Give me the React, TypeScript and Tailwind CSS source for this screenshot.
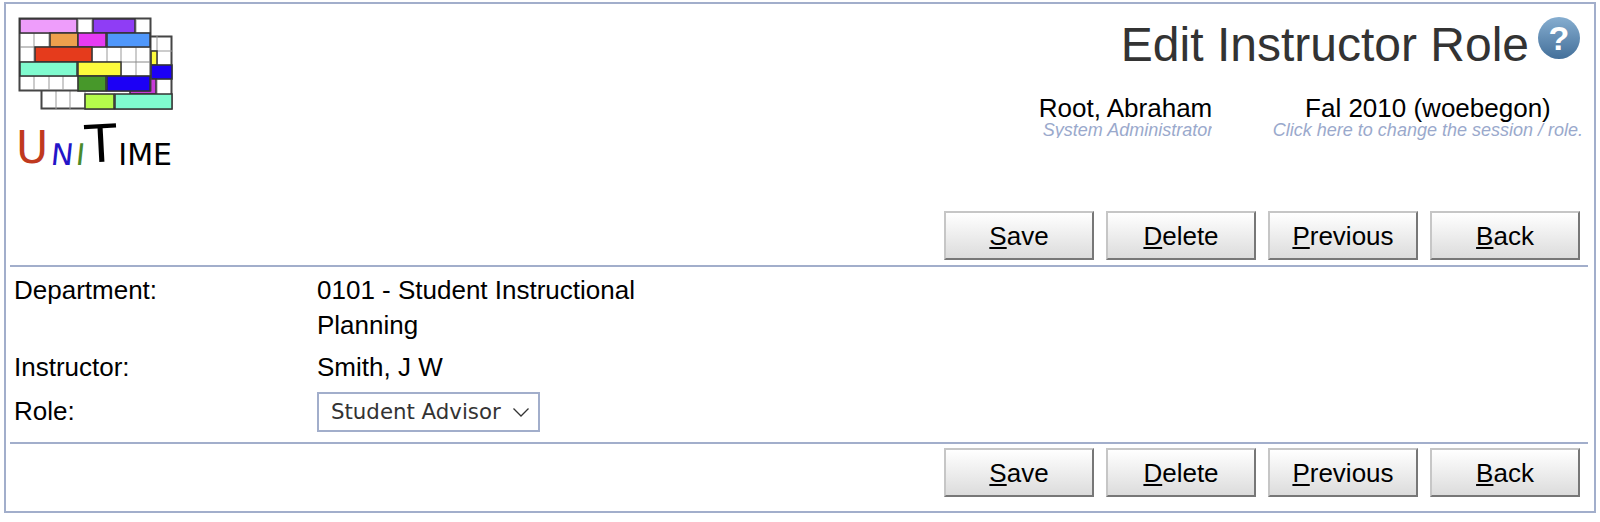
const sans = { fontFamily: '"Liberation Sans", Arial, sans-serif' };

function Logo() {
  const vLines = [34, 49, 63, 78, 92, 107, 121, 136];
  const blocks: [number, number, number, number, string][] = [
    [151, 51, 6, 14, "#fdfb3c"],
    [151, 65, 21, 14, "#1a00f5"],
    [130, 79, 26, 15, "#c93bd8"],
    [85, 94, 29, 15, "#b5fb4c"],
    [115, 94, 57, 15, "#80fbcf"],
  ];
  const front: [number, number, number, number, string][] = [
    [20, 19, 57, 14, "#ee9dfb"],
    [93, 19, 42, 14, "#8f3cf5"],
    [50, 33, 28, 14, "#eda04e"],
    [78, 33, 28, 14, "#e63bf3"],
    [107, 33, 43, 14, "#4f97fb"],
    [35, 47, 57, 15, "#e53b1f"],
    [20, 62, 57, 14, "#80fbcf"],
    [78, 62, 43, 14, "#fdfb3c"],
    [78, 76, 28, 15, "#46982a"],
    [107, 76, 43, 15, "#1a00f5"],
  ];
  return (
    <svg width="180" height="115" viewBox="0 0 180 115" className="block">
      <defs>
        <filter id="soft">
          <feGaussianBlur stdDeviation="0.6" />
        </filter>
      </defs>
      <g filter="url(#soft)">
        <rect x="41.5" y="36.5" width="130" height="72" fill="#fff" stroke="#444" strokeWidth="2" />
        <line x1="157" x2="157" y1="36" y2="109" stroke="#999" />
        {[51, 65, 79].map((y) => <line key={y} x1="151" x2="172" y1={y} y2={y} stroke="#999" />)}
        {[56, 70, 85].map((x) => <line key={x} x1={x} x2={x} y1="91" y2="109" stroke="#999" />)}
        {blocks.map(([x, y, w, h, c]) => <rect key={x + "-" + y} x={x} y={y} width={w} height={h} fill={c} stroke="#333" strokeWidth="1.5" />)}
        <rect x="19.5" y="18.5" width="131" height="72" fill="#fff" stroke="#444" strokeWidth="2" />
        {vLines.map((x) => <line key={x} x1={x} x2={x} y1="19" y2="90" stroke="#999" />)}
        {[33, 47, 62, 76].map((y) => <line key={y} x1="20" x2="150" y1={y} y2={y} stroke="#888" />)}
        {front.map(([x, y, w, h, c]) => <rect key={x + "-" + y} x={x} y={y} width={w} height={h} fill={c} stroke="#333" strokeWidth="1.5" />)}
      </g>
    </svg>
  );
}

function Buttons() {
  const items = [
    ["S", "ave"],
    ["D", "elete"],
    ["P", "revious"],
    ["B", "ack"],
  ];
  return (
    <div className="flex justify-end gap-[12px] pr-[14px]">
      {items.map(([key, rest]) => (
        <button
          key={key}
          type="button"
          className="h-[49px] w-[150px] border-2 border-t-[#c6c6c6] border-l-[#c6c6c6] border-r-[#777] border-b-[#777] bg-gradient-to-b from-white to-[#dcdcdc] text-[26px] leading-none text-black"
          style={sans}
        >
          <span className="underline underline-offset-2">{key}</span>
          {rest}
        </button>
      ))}
    </div>
  );
}

export default function App() {
  return (
    <div className="h-[522px] overflow-hidden bg-white text-[26px] text-black" style={sans}>
      <div className="mx-[4px] mt-[2px] h-[511px] border-2 border-[#a2aecb]">
        <div className="flex h-[202px] justify-between">
          <div className="ml-[-6px] mt-[-4px] flex flex-col">
            <Logo />
            <div className="ml-[16px] mt-[3px] flex items-end text-[30px] leading-none" style={{ fontFamily: '"DejaVu Sans", sans-serif' }}>
              <span className="text-[44px] text-[#c0391f]">U</span>
              <span className="ml-[3px] inline-block -skew-x-6 font-medium text-[#2414c8]">N</span>
              <span className="ml-[2px] inline-block -skew-x-6 text-[#4a8a2a]">I</span>
              <span className="inline-block -rotate-3 text-[52px] font-medium">T</span>
              <span className="ml-[2px]">IME</span>
            </div>
          </div>
          <div className="flex flex-col items-end pr-[14px]">
            <div className="mt-[13px] flex items-start gap-[9px]">
              <span className="text-[48px] leading-[56px] text-[#333]">Edit Instructor Role</span>
              <span className="flex h-[42px] w-[42px] items-center justify-center rounded-full bg-gradient-to-b from-[#86aed0] to-[#44709a] text-[34px] font-bold text-white">?</span>
            </div>
            <div className="mt-[21px] flex">
              <div className="mr-[61px] w-[173px] overflow-hidden whitespace-nowrap text-center">
                <div className="leading-[28px]">Root, Abraham</div>
                <div className="ml-[4px] text-left text-[18px] italic leading-[16px] text-[#9aa9cc]">System Administrator</div>
              </div>
              <div className="mr-[-3px] whitespace-nowrap text-center">
                <div className="leading-[28px]">Fal 2010 (woebegon)</div>
                <div className="text-[18px] italic leading-[16px] text-[#9aa9cc]">Click here to change the session / role.</div>
              </div>
            </div>
          </div>
        </div>
        <div className="mt-[5px]"><Buttons /></div>
        <div className="ml-[4px] mr-[6px] mt-[5px] border-t-2 border-[#a2aecb]" />
        <div className="mx-[4px] mt-[6px] grid grid-cols-[303px_320px] gap-y-[7px] px-[4px] leading-[35px]">
          <div>Department:</div>
          <div>0101 - Student Instructional Planning</div>
          <div>Instructor:</div>
          <div>Smith, J W</div>
          <div className="pt-[2px]">Role:</div>
          <div>
            <div className="flex h-[40px] w-[223px] items-center justify-between border-2 border-[#a2aecb] pl-[12px] pr-[8px] text-[21.3px] leading-none text-[#333]" style={{ fontFamily: '"DejaVu Sans", sans-serif' }}>
              <span>Student Advisor</span>
              <svg width="18" height="10" viewBox="0 0 18 10" fill="none" stroke="#333" strokeWidth="1.3"><path d="M1.5 1.5 9 9l7.5-7.5" /></svg>
            </div>
          </div>
        </div>
        <div className="ml-[4px] mr-[6px] mt-[10px] border-t-2 border-[#a2aecb]" />
        <div className="mt-[4px]"><Buttons /></div>
      </div>
      <div className="mt-[7px] flex whitespace-nowrap pl-[14px] text-[26px] leading-[30px]">
        <span className="w-[246px]">Use the role list.</span>
        <span className="w-[493px]">The role of the instructor is set here.</span>
        <span className="w-[464px]">The Access Panel shows the role.</span>
        <span>This is a note about the role page.</span>
      </div>
    </div>
  );
}
